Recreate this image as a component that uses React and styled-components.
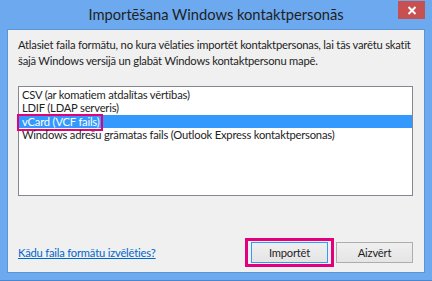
import React from "react";
import styled, { createGlobalStyle } from "styled-components";

const Global = createGlobalStyle`
  html, body { margin: 0; padding: 0; background: #6ca9ef; }
  * { box-sizing: border-box; }
`;

const Window = styled.div`
  width: 432px;
  height: 281px;
  background: #6ca9ef;
  border-bottom: 1px solid #4a86cf;
  display: flex;
  flex-direction: column;
  padding: 0 7px 7px 7px;
  font-family: Lato, "Noto Sans", sans-serif;
  color: #1e1e1e;
`;

const TitleBar = styled.div`
  position: relative;
  height: 29px;
  flex: none;
  display: flex;
  align-items: center;
  justify-content: center;
  font-size: 14.7px;
  color: #1f1f1f;
  padding-bottom: 1px;
`;

const Close = styled.div`
  position: absolute;
  right: 0;
  top: 1px;
  width: 27px;
  height: 18px;
  background: #c75050;
  display: flex;
  align-items: center;
  justify-content: center;
`;

const Panel = styled.div`
  flex: 1;
  background: #f0f0f0;
  border: 1px solid #5b95d8;
  display: flex;
  flex-direction: column;
  padding: 7px 11px 9px 10px;
`;

const Text = `
  font-size: 11.2px;
  letter-spacing: -0.2px;
`;

const Intro = styled.p`
  margin: 0;
  ${Text}
  line-height: 16px;
`;

const List = styled.div`
  margin-top: 17px;
  height: 110px;
  background: #fff;
  border: 1px solid #828790;
  padding-top: 1px;
  display: flex;
  flex-direction: column;
`;

const Item = styled.div`
  position: relative;
  height: 13.4px;
  line-height: 13.4px;
  ${Text}
  padding-left: 3px;
  white-space: nowrap;
  background: ${(p) => (p.$selected ? "#3399ff" : "transparent")};
  color: ${(p) => (p.$selected ? "#fff" : "#1e1e1e")};
`;

const Mark = styled.span`
  position: absolute;
  left: -2px;
  top: -1px;
  width: ${(p) => p.$w}px;
  height: 17px;
  border: 2px solid #e3007d;
  pointer-events: none;
`;

const Footer = styled.div`
  margin-top: auto;
  display: flex;
  align-items: center;
  justify-content: space-between;
`;

const Link = styled.a`
  ${Text}
  color: #0066cc;
  text-decoration: underline;
`;

const Buttons = styled.div`
  display: flex;
  gap: 8px;
`;

const Highlight = styled.div`
  border: 3px solid #e3007d;
  padding: 1px 3px;
  margin: -4px -6px -4px 0;
`;

const Button = styled.button`
  width: 77px;
  height: 21px;
  font-family: inherit;
  ${Text}
  color: #1e1e1e;
  background: linear-gradient(#efefef, #e5e5e5);
  border: 1px solid ${(p) => (p.$default ? "#3399ff" : "#adadad")};
  padding: 0;
  display: flex;
  align-items: center;
  justify-content: center;
`;

const items = [
  "CSV (ar komatiem atdalītas vērtības)",
  "LDIF (LDAP serveris)",
  "vCard (VCF fails)",
  "Windows adrešu grāmatas fails (Outlook Express kontaktpersonas)",
];

export default function App() {
  return (
    <>
      <Global />
      <Window>
        <TitleBar>
          Importēšana Windows kontaktpersonās
          <Close>
            <svg width="10" height="9" viewBox="0 0 10 9">
              <path d="M1.5 1 L8.5 8 M8.5 1 L1.5 8" stroke="#fff" strokeWidth="2" />
            </svg>
          </Close>
        </TitleBar>
        <Panel>
          <Intro>
            Atlasiet faila formātu, no kura vēlaties importēt kontaktpersonas, lai tās varētu skatīt
            šajā Windows versijā un glabāt Windows kontaktpersonu mapē.
          </Intro>
          <List>
            {items.map((t, i) => (
              <Item key={t} $selected={i === 2}>
                {t}
                {i === 2 && <Mark $w={86} />}
              </Item>
            ))}
          </List>
          <Footer>
            <Link>Kādu faila formātu izvēlēties?</Link>
            <Buttons>
              <Highlight>
                <Button $default>Importēt</Button>
              </Highlight>
              <Button>Aizvērt</Button>
            </Buttons>
          </Footer>
        </Panel>
      </Window>
    </>
  );
}
